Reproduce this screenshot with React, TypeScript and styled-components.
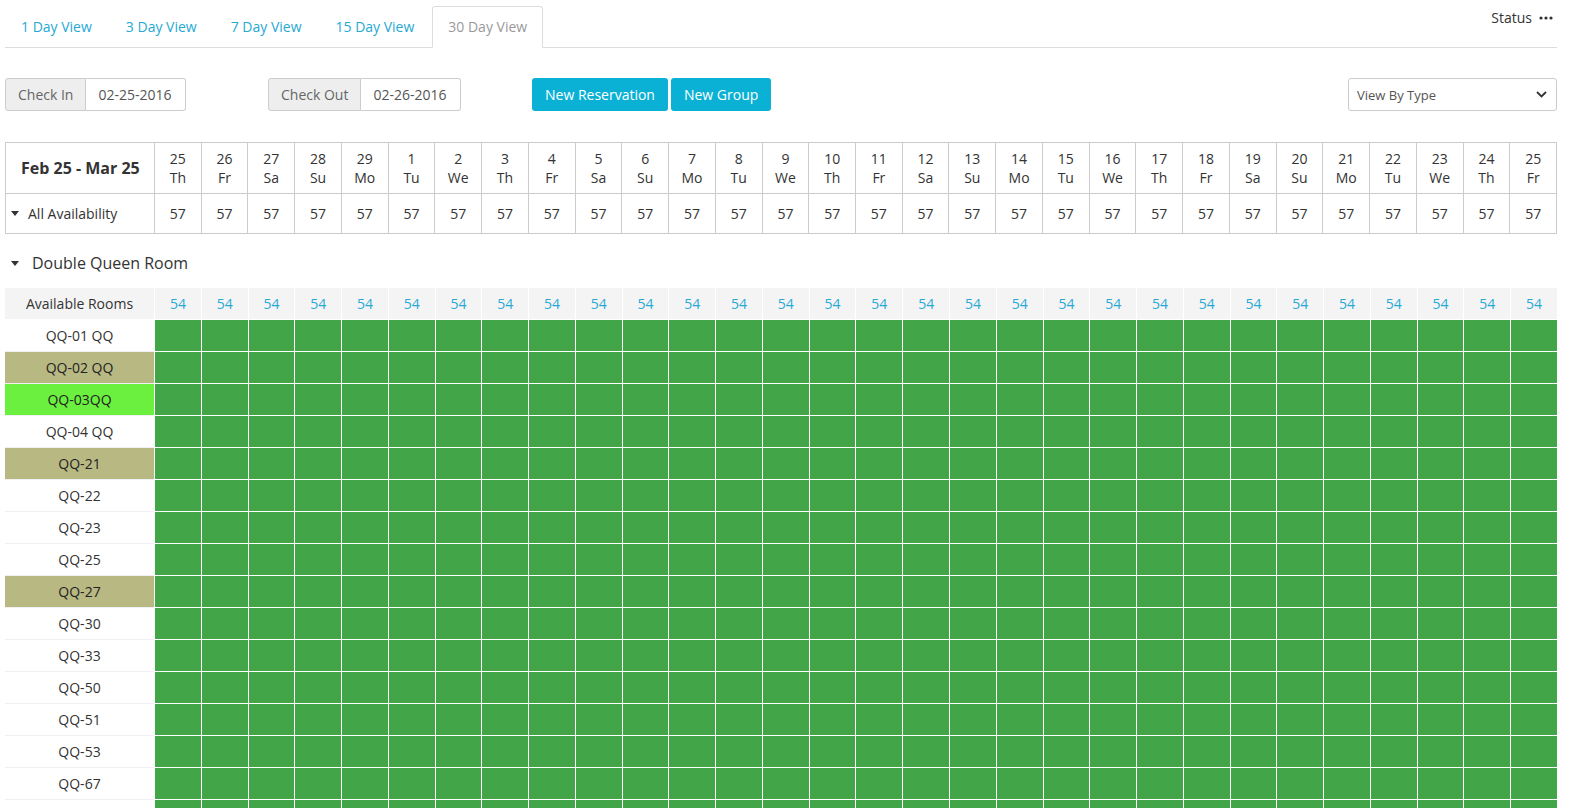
import styled, { createGlobalStyle } from 'styled-components'

const GlobalStyle = createGlobalStyle`
  html, body {
    margin: 0;
    padding: 0;
    overflow: hidden;
    background: #fff;
  }
  body {
    font-family: "Open Sans", "Liberation Sans", sans-serif;
    font-size: 14px;
    color: #333;
  }
`

const Page = styled.div`
  padding: 7px 13px 0 5px;
`

const TabBar = styled.div`
  display: flex;
  align-items: flex-end;
  border-bottom: 1px solid #ddd;
  height: 40px;
`

const Tab = styled.div<{ active?: boolean }>`
  padding: 0 15px;
  height: 40px;
  line-height: 40px;
  margin-right: 2px;
  margin-bottom: -1px;
  color: ${(p) => (p.active ? '#999' : '#26a9d3')};
  background: ${(p) => (p.active ? '#fff' : 'transparent')};
  border: 1px solid ${(p) => (p.active ? '#ddd' : 'transparent')};
  border-bottom-color: ${(p) => (p.active ? '#fff' : 'transparent')};
  border-radius: 3px 3px 0 0;
  cursor: pointer;
`

const StatusMenu = styled.div`
  margin-left: auto;
  align-self: flex-start;
  display: flex;
  align-items: center;
  gap: 7px;
  margin-top: 1px;
  margin-right: 4px;
  color: #333;
  font-size: 14px;
`

const Toolbar = styled.div`
  display: grid;
  grid-template-columns: 263px 263px 1fr 209px;
  align-items: center;
  margin-top: 30px;
  height: 33px;
`

const DateGroup = styled.div`
  display: flex;
  height: 33px;
`

const DateLabel = styled.span`
  display: flex;
  align-items: center;
  padding: 0 12px;
  background: #eee;
  border: 1px solid #ccc;
  border-radius: 3px 0 0 3px;
  color: #666;
`

const DateInput = styled.span<{ w: number }>`
  display: flex;
  align-items: center;
  width: ${(p) => p.w}px;
  box-sizing: border-box;
  padding: 0 12px;
  border: 1px solid #ccc;
  border-left: none;
  border-radius: 0 3px 3px 0;
  color: #555;
`

const Buttons = styled.div`
  display: flex;
  gap: 3px;
  padding-left: 1px;
`

const ActionButton = styled.button`
  height: 33px;
  padding: 0 13px;
  border: none;
  border-radius: 3px;
  background: #0bb1d4;
  color: #fff;
  font-family: inherit;
  font-size: 14px;
  cursor: pointer;
`

const Select = styled.div`
  height: 33px;
  box-sizing: border-box;
  border: 1px solid #ccc;
  border-radius: 3px;
  display: flex;
  align-items: center;
  justify-content: space-between;
  padding: 0 9px 0 8px;
  font-size: 13px;
  color: #555;
`

const HeadTable = styled.div`
  margin-top: 31px;
  display: grid;
  grid-template-columns: 149px repeat(30, 1fr);
  border-top: 1px solid #ccc;
  border-left: 1px solid #ccc;
`

const HeadCell = styled.div<{ tall?: boolean }>`
  height: ${(p) => (p.tall ? 50 : 39)}px;
  border-right: 1px solid #ccc;
  border-bottom: 1px solid #ccc;
  display: flex;
  flex-direction: column;
  align-items: center;
  justify-content: center;
  line-height: 19px;
  color: #333;
`

const RangeCell = styled(HeadCell)`
  align-items: flex-start;
  padding-left: 15px;
  font-size: 16px;
  font-weight: 700;
`

const AvailCell = styled(HeadCell)`
  flex-direction: row;
  justify-content: flex-start;
  padding-left: 5px;
  gap: 9px;
`

const Caret = styled.span`
  display: inline-block;
  width: 0;
  height: 0;
  border-left: 4.5px solid transparent;
  border-right: 4.5px solid transparent;
  border-top: 5px solid #333;
`

const RoomType = styled.div`
  display: flex;
  align-items: center;
  gap: 13px;
  padding-left: 6px;
  margin: 18px 0 14px;
  height: 22px;
  font-size: 16px;
  color: #333;
`

const Grid = styled.div`
  display: grid;
  grid-template-columns: 149px repeat(30, 1fr);
`

const SummaryCell = styled.div<{ first?: boolean }>`
  height: 31px;
  background: #f4f4f4;
  border-bottom: 1px solid #fff;
  border-left: ${(p) => (p.first ? 'none' : '1px solid #fff')};
  display: flex;
  align-items: center;
  justify-content: center;
  color: ${(p) => (p.first ? '#333' : '#2aa9d6')};
`

const RoomLabel = styled.div<{ tone: 'plain' | 'olive' | 'lime' }>`
  height: 31px;
  border-bottom: 1px solid #f0f0f0;
  display: flex;
  align-items: center;
  justify-content: center;
  background: ${(p) =>
    p.tone === 'olive' ? '#b8b882' : p.tone === 'lime' ? '#6bf040' : '#fff'};
  color: ${(p) => (p.tone === 'plain' ? '#333' : '#222')};
`

const DayCell = styled.div`
  height: 31px;
  background: #42a547;
  border-left: 1px solid #fff;
  border-bottom: 1px solid #fff;
`

const tabs = ['1 Day View', '3 Day View', '7 Day View', '15 Day View', '30 Day View']

const weekdays = ['Su', 'Mo', 'Tu', 'We', 'Th', 'Fr', 'Sa']
const days = Array.from({ length: 30 }, (_, i) => {
  const d = new Date(2016, 1, 25 + i)
  return { num: d.getDate(), wd: weekdays[d.getDay()] }
})

// last row only peeks in at the bottom edge, its label is below the fold
const rooms: { name: string; tone: 'plain' | 'olive' | 'lime' }[] = [
  { name: 'QQ-01 QQ', tone: 'plain' },
  { name: 'QQ-02 QQ', tone: 'olive' },
  { name: 'QQ-03QQ', tone: 'lime' },
  { name: 'QQ-04 QQ', tone: 'plain' },
  { name: 'QQ-21', tone: 'olive' },
  { name: 'QQ-22', tone: 'plain' },
  { name: 'QQ-23', tone: 'plain' },
  { name: 'QQ-25', tone: 'plain' },
  { name: 'QQ-27', tone: 'olive' },
  { name: 'QQ-30', tone: 'plain' },
  { name: 'QQ-33', tone: 'plain' },
  { name: 'QQ-50', tone: 'plain' },
  { name: 'QQ-51', tone: 'plain' },
  { name: 'QQ-53', tone: 'plain' },
  { name: 'QQ-67', tone: 'plain' },
  { name: '', tone: 'plain' },
]

const Dots = () => (
  <svg width="14" height="4" viewBox="0 0 14 4">
    <circle cx="2" cy="2" r="1.6" fill="#333" />
    <circle cx="7" cy="2" r="1.6" fill="#333" />
    <circle cx="12" cy="2" r="1.6" fill="#333" />
  </svg>
)

const Chevron = () => (
  <svg width="11" height="7" viewBox="0 0 11 7">
    <path d="M1 1l4.5 4.5L10 1" fill="none" stroke="#333" strokeWidth="1.8" />
  </svg>
)

const App = () => (
  <Page>
    <GlobalStyle />
    <TabBar>
      {tabs.map((t) => (
        <Tab key={t} active={t === '30 Day View'}>
          {t}
        </Tab>
      ))}
      <StatusMenu>
        Status <Dots />
      </StatusMenu>
    </TabBar>

    <Toolbar>
      <DateGroup>
        <DateLabel>Check In</DateLabel>
        <DateInput w={100}>02-25-2016</DateInput>
      </DateGroup>
      <DateGroup>
        <DateLabel>Check Out</DateLabel>
        <DateInput w={100}>02-26-2016</DateInput>
      </DateGroup>
      <Buttons>
        <ActionButton>New Reservation</ActionButton>
        <ActionButton>New Group</ActionButton>
      </Buttons>
      <Select>
        View By Type <Chevron />
      </Select>
    </Toolbar>

    <HeadTable>
      <RangeCell tall>Feb 25 - Mar 25</RangeCell>
      {days.map((d, i) => (
        <HeadCell tall key={i}>
          <span>{d.num}</span>
          <span>{d.wd}</span>
        </HeadCell>
      ))}
      <AvailCell>
        <Caret /> All Availability
      </AvailCell>
      {days.map((_, i) => (
        <HeadCell key={i}>57</HeadCell>
      ))}
    </HeadTable>

    <RoomType>
      <Caret /> Double Queen Room
    </RoomType>

    <Grid>
      <SummaryCell first>Available Rooms</SummaryCell>
      {days.map((_, i) => (
        <SummaryCell key={i}>54</SummaryCell>
      ))}
      {rooms.map((r, n) => [
        <RoomLabel key={'label' + n} tone={r.tone}>
          {r.name}
        </RoomLabel>,
        ...days.map((_, i) => <DayCell key={n + '-' + i} />),
      ])}
    </Grid>
  </Page>
)

export default App
